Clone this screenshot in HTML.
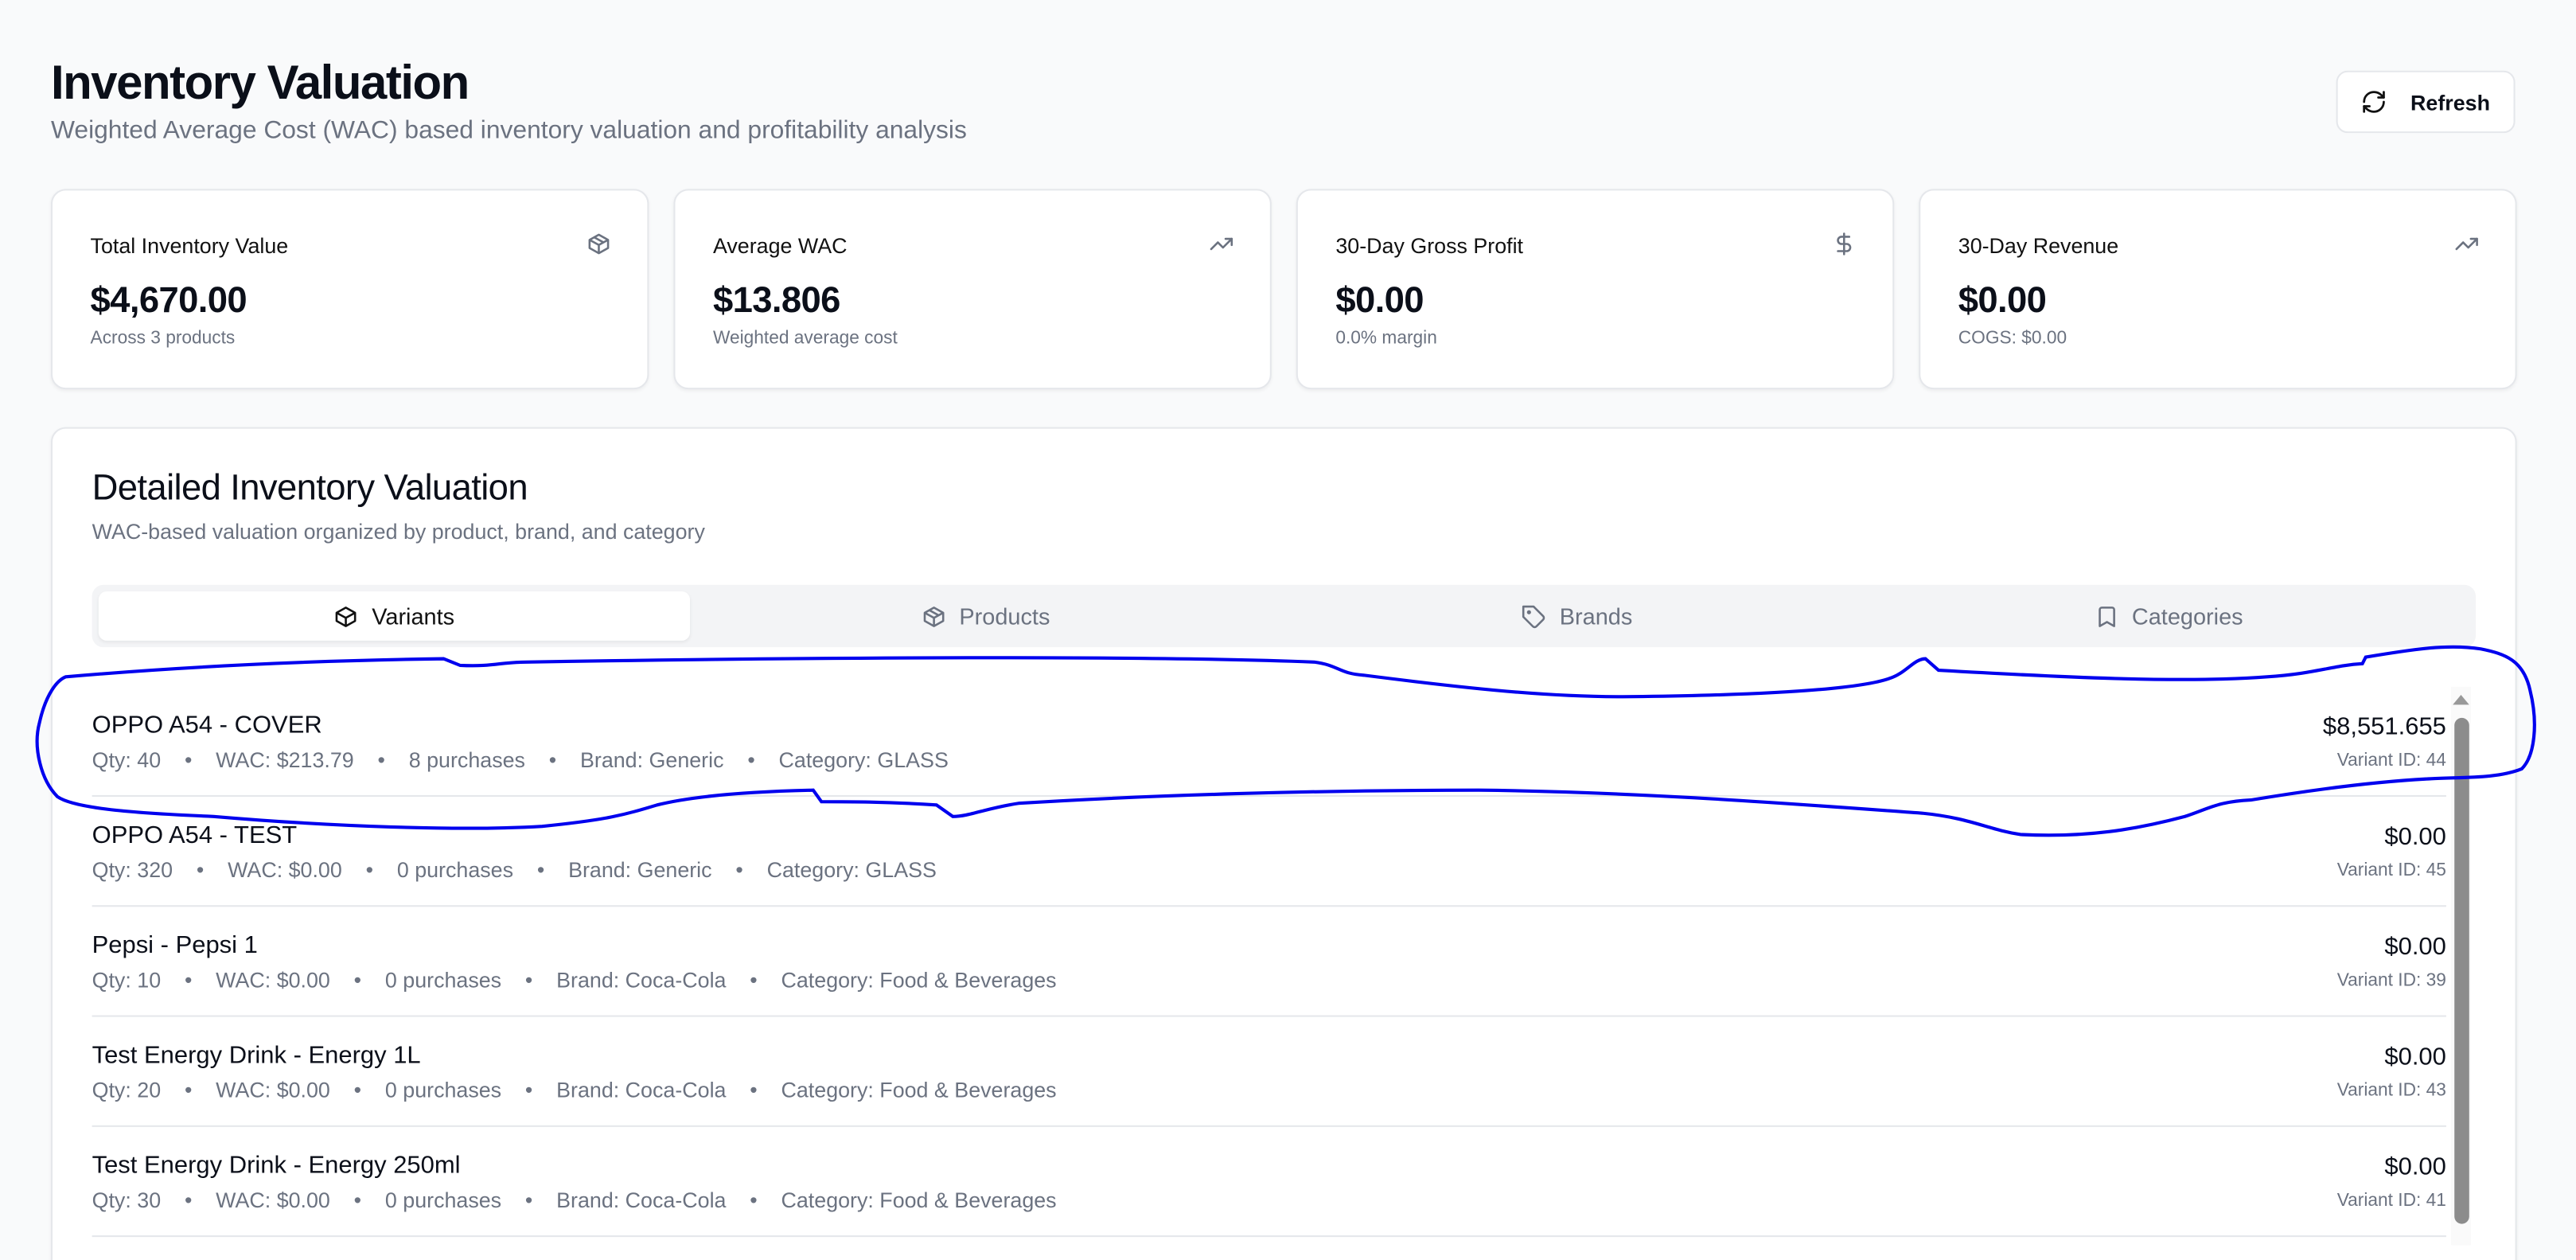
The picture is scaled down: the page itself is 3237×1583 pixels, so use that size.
<!DOCTYPE html>
<html><head><meta charset="utf-8"><style>
*{box-sizing:border-box;margin:0;padding:0}
html,body{width:3237px;height:1583px;overflow:hidden;background:#f9fafb}
#w{width:1568px;height:767px;transform:scale(2.0644,2.0639);transform-origin:0 0;position:relative;font-family:"Liberation Sans",sans-serif;color:#0b0f19}
.a{position:absolute}
.card{position:absolute;background:#fff;border:1px solid #e5e7eb;border-radius:9px;box-shadow:0 1px 2px rgba(0,0,0,.05)}
.lbl{position:absolute;left:23px;top:26px;font-size:13px;color:#111}
.val{position:absolute;left:23px;top:54px;font-size:22px;font-weight:bold;letter-spacing:-.3px}
.sub{position:absolute;left:23px;top:84px;font-size:11px;color:#6b7280}
.ic{position:absolute;right:22px;top:25px}
.row{position:absolute;left:56px;width:1433px;height:67px;border-bottom:1px solid #e5e7eb}
.nm{position:absolute;left:0;top:15px;font-size:15px}
.dt{position:absolute;left:0;top:37px;font-size:13px;color:#6b7280;white-space:pre}
.pr{position:absolute;right:0;top:16px;font-size:15px}
.id{position:absolute;right:0;top:39px;font-size:11px;color:#6b7280}
.tab{position:absolute;top:4px;height:30px;width:360px;display:flex;align-items:center;justify-content:center;gap:8px;font-size:14px;color:#6b7280}
</style></head><body><div id="w">
<div class="a" style="left:31px;top:35px;font-size:29px;font-weight:bold;letter-spacing:-.7px">Inventory Valuation</div>
<div class="a" style="left:31px;top:71px;font-size:15.4px;color:#6b7280">Weighted Average Cost (WAC) based inventory valuation and profitability analysis</div>
<div class="a" style="left:1422px;top:43px;width:109px;height:38px;background:#fff;border:1px solid #e5e7eb;border-radius:7px;display:flex;align-items:center;justify-content:center;gap:14px;font-size:13px;font-weight:bold">
<svg width="16" height="16" viewBox="0 0 24 24" fill="none" stroke="#111" stroke-width="2" stroke-linecap="round" stroke-linejoin="round"><path d="M3 12a9 9 0 0 1 9-9 9.75 9.75 0 0 1 6.74 2.74L21 8"/><path d="M21 3v5h-5"/><path d="M21 12a9 9 0 0 1-9 9 9.75 9.75 0 0 1-6.740-2.74L3 16"/><path d="M8 16H3v5"/></svg>Refresh</div>

<div class="card" style="left:31px;top:115px;width:364px;height:122px"><div class="lbl">Total Inventory Value</div><div class="val">$4,670.00</div><div class="sub">Across 3 products</div>
<svg class="ic" width="15" height="15" viewBox="0 0 24 24" fill="none" stroke="#6b7280" stroke-width="2" stroke-linejoin="round"><path d="M21 8 12 3 3 8v8l9 5 9-5z"/><path d="M3 8l9 5 9-5M12 13v8M7.5 5.5l9 5"/></svg></div>
<div class="card" style="left:410px;top:115px;width:364px;height:122px"><div class="lbl">Average WAC</div><div class="val">$13.806</div><div class="sub">Weighted average cost</div>
<svg class="ic" width="15" height="15" viewBox="0 0 24 24" fill="none" stroke="#6b7280" stroke-width="2" stroke-linecap="round" stroke-linejoin="round"><path d="M22 7l-8.5 8.5-5-5L2 17"/><path d="M16 7h6v6"/></svg></div>
<div class="card" style="left:789px;top:115px;width:364px;height:122px"><div class="lbl">30-Day Gross Profit</div><div class="val">$0.00</div><div class="sub">0.0% margin</div>
<svg class="ic" width="15" height="15" viewBox="0 0 24 24" fill="none" stroke="#6b7280" stroke-width="2" stroke-linecap="round"><path d="M12 2v20M17 5H9.5a3.5 3.5 0 0 0 0 7h5a3.5 3.5 0 0 1 0 7H6"/></svg></div>
<div class="card" style="left:1168px;top:115px;width:364px;height:122px"><div class="lbl">30-Day Revenue</div><div class="val">$0.00</div><div class="sub">COGS: $0.00</div>
<svg class="ic" width="15" height="15" viewBox="0 0 24 24" fill="none" stroke="#6b7280" stroke-width="2" stroke-linecap="round" stroke-linejoin="round"><path d="M22 7l-8.5 8.5-5-5L2 17"/><path d="M16 7h6v6"/></svg></div>

<div class="card" style="left:31px;top:260px;width:1501px;height:540px"></div>
<div class="a" style="left:56px;top:284px;font-size:22px;letter-spacing:-.3px">Detailed Inventory Valuation</div>
<div class="a" style="left:56px;top:316px;font-size:13px;color:#6b7280">WAC-based valuation organized by product, brand, and category</div>
<div class="a" style="left:56px;top:356px;width:1451px;height:38px;background:#f3f4f6;border-radius:7px">
<div class="tab" style="left:4px;background:#fff;border-radius:5px;color:#111;box-shadow:0 1px 2px rgba(0,0,0,.06)"><svg width="15" height="15" viewBox="0 0 24 24" fill="none" stroke="#111" stroke-width="2" stroke-linejoin="round"><path d="M21 8 12 3 3 8v8l9 5 9-5z"/><path d="M3 8l9 5 9-5M12 13v8"/></svg>Variants</div>
<div class="tab" style="left:364px"><svg width="15" height="15" viewBox="0 0 24 24" fill="none" stroke="#6b7280" stroke-width="2" stroke-linejoin="round"><path d="M21 8 12 3 3 8v8l9 5 9-5z"/><path d="M3 8l9 5 9-5M12 13v8M7.5 5.5l9 5"/></svg>Products</div>
<div class="tab" style="left:724px"><svg width="15" height="15" viewBox="0 0 24 24" fill="none" stroke="#6b7280" stroke-width="2" stroke-linejoin="round"><path d="M12 2H2v10l9.3 9.3a2.4 2.4 0 0 0 3.4 0l6.6-6.6a2.4 2.4 0 0 0 0-3.4z"/><circle cx="7.5" cy="7.5" r="1"/></svg>Brands</div>
<div class="tab" style="left:1084px"><svg width="15" height="15" viewBox="0 0 24 24" fill="none" stroke="#6b7280" stroke-width="2" stroke-linejoin="round"><path d="M19 21l-7-4-7 4V5a2 2 0 0 1 2-2h10a2 2 0 0 1 2 2z"/></svg>Categories</div>
</div>

<div class="row" style="top:418px"><div class="nm">OPPO A54 - COVER</div><div class="dt">Qty: 40    •    WAC: $213.79    •    8 purchases    •    Brand: Generic    •    Category: GLASS</div><div class="pr">$8,551.655</div><div class="id">Variant ID: 44</div></div>
<div class="row" style="top:485px"><div class="nm">OPPO A54 - TEST</div><div class="dt">Qty: 320    •    WAC: $0.00    •    0 purchases    •    Brand: Generic    •    Category: GLASS</div><div class="pr">$0.00</div><div class="id">Variant ID: 45</div></div>
<div class="row" style="top:552px"><div class="nm">Pepsi - Pepsi 1</div><div class="dt">Qty: 10    •    WAC: $0.00    •    0 purchases    •    Brand: Coca-Cola    •    Category: Food &amp; Beverages</div><div class="pr">$0.00</div><div class="id">Variant ID: 39</div></div>
<div class="row" style="top:619px"><div class="nm">Test Energy Drink - Energy 1L</div><div class="dt">Qty: 20    •    WAC: $0.00    •    0 purchases    •    Brand: Coca-Cola    •    Category: Food &amp; Beverages</div><div class="pr">$0.00</div><div class="id">Variant ID: 43</div></div>
<div class="row" style="top:686px"><div class="nm">Test Energy Drink - Energy 250ml</div><div class="dt">Qty: 30    •    WAC: $0.00    •    0 purchases    •    Brand: Coca-Cola    •    Category: Food &amp; Beverages</div><div class="pr">$0.00</div><div class="id">Variant ID: 41</div></div>

<div class="a" style="left:1492px;top:418px;width:12px;height:340px;background:#fafafa"></div>
<div class="a" style="left:1493px;top:423px;width:0;height:0;border-left:5px solid transparent;border-right:5px solid transparent;border-bottom:6px solid #999"></div>
<div class="a" style="left:1494px;top:437px;width:9px;height:308px;background:#8c8c8c;border-radius:5px"></div>

<svg class="a" style="left:0;top:0" width="1568" height="767" viewBox="0 0 1568 767" fill="none"><path d="M40 412 C120 405 200 402 270 401 L280 405 C300 406 305 403 320 403 C500 400 700 399 800 403 C815 405 815 410 830 411 C900 420 950 425 1000 424 C1070 423 1130 420 1150 413 C1160 410 1165 401 1172 401 L1180 408 C1250 412 1330 416 1380 412 C1410 410 1420 405 1438 404 L1440 400 C1470 395 1490 392 1510 395 C1525 398 1536 402 1540 420 C1545 440 1543 460 1535 468 C1520 474 1500 473 1480 474 C1440 476 1400 482 1370 487 C1350 488 1345 492 1330 497 C1300 505 1270 510 1230 508 C1210 505 1200 498 1170 495 C1100 490 1000 482 900 481 C800 481 700 484 620 489 C600 492 590 497 580 497 L570 490 C540 488 515 488 500 488 L495 481 C450 482 420 485 400 490 C380 496 370 499 330 503 C280 506 200 503 130 497 C80 495 45 492 35 485 C25 475 20 455 24 440 C28 422 35 414 40 412 Z" stroke="#0000ee" stroke-width="2"/></svg>
</div></body></html>
